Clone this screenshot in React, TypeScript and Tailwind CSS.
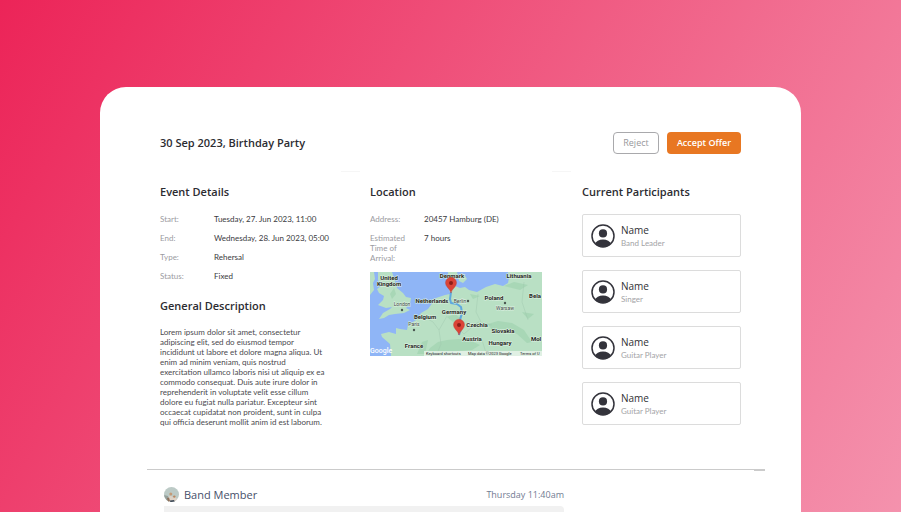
import { ReactNode } from 'react'
import clsx from 'clsx'

const eventDetails = [
  { label: 'Start:', value: 'Tuesday, 27. Jun 2023, 11:00' },
  { label: 'End:', value: 'Wednesday, 28. Jun 2023, 05:00' },
  { label: 'Type:', value: 'Rehersal' },
  { label: 'Status:', value: 'Fixed' },
]

const locationDetails = [
  { label: 'Address:', value: '20457 Hamburg (DE)' },
  { label: 'Estimated Time of Arrival:', value: '7 hours' },
]

const participants = [
  { id: 1, name: 'Name', role: 'Band Leader' },
  { id: 2, name: 'Name', role: 'Singer' },
  { id: 3, name: 'Name', role: 'Guitar Player' },
  { id: 4, name: 'Name', role: 'Guitar Player' },
]

const countries = [
  { name: 'United', x: 19, y: 8 },
  { name: 'Kingdom', x: 19, y: 14 },
  { name: 'Denmark', x: 82, y: 6 },
  { name: 'Lithuania', x: 149, y: 6 },
  { name: 'Netherlands', x: 62, y: 31 },
  { name: 'Poland', x: 124, y: 28 },
  { name: 'Bela', x: 165, y: 26 },
  { name: 'Germany', x: 84, y: 42 },
  { name: 'Belgium', x: 55, y: 47 },
  { name: 'Czechia', x: 107, y: 55 },
  { name: 'Slovakia', x: 133, y: 61 },
  { name: 'Austria', x: 102, y: 69 },
  { name: 'Hungary', x: 130, y: 73 },
  { name: 'France', x: 44, y: 76 },
  { name: 'Mol', x: 166, y: 69 },
]

const cities = [
  { name: 'London', x: 32, y: 35, dotX: 32, dotY: 38 },
  { name: 'Berlin', x: 90, y: 32, dotX: 98, dotY: 29 },
  { name: 'Warsaw', x: 135, y: 39, dotX: 135, dotY: 31 },
  { name: 'Paris', x: 44, y: 55, dotX: 44, dotY: 58 },
]

const SectionTitle = ({ children, className }: { children: ReactNode; className?: string }) => (
  <h2 className={clsx('text-[11px] leading-4 font-semibold text-[#2c2c31]', className)}>
    {children}
  </h2>
)

const DetailList = ({ items }: { items: { label: string; value: string }[] }) => (
  <dl className="mt-[14px] flex flex-col gap-[9px] font-[Lato,sans-serif] text-[8px] leading-[10px]">
    {items.map((item) => (
      <div key={item.label} className="grid grid-cols-[54px_1fr]">
        <dt className="pr-3 text-[#9b9b9f]">{item.label}</dt>
        <dd className="whitespace-nowrap text-[#3a3a3e]">{item.value}</dd>
      </div>
    ))}
  </dl>
)

const PersonIcon = () => (
  <svg viewBox="0 0 24 24" className="size-6 shrink-0" aria-hidden="true">
    <defs>
      <clipPath id="person-clip">
        <circle cx="12" cy="12" r="11" />
      </clipPath>
    </defs>
    <circle cx="12" cy="12" r="11" fill="none" stroke="#33333b" strokeWidth="1.5" />
    <circle cx="12" cy="9.4" r="4.1" fill="#33333b" />
    <path
      d="M3.6 20.5C5 17 8 15.4 12 15.4s7 1.6 8.4 5.1V24H3.6Z"
      fill="#33333b"
      clipPath="url(#person-clip)"
    />
  </svg>
)

const Avatar = () => (
  <svg viewBox="0 0 15 15" className="size-[15px] shrink-0" role="img" aria-label="Band Member">
    <defs>
      <clipPath id="avatar-clip">
        <circle cx="7.5" cy="7.5" r="7.5" />
      </clipPath>
    </defs>
    <g clipPath="url(#avatar-clip)">
      <path d="M0 0h15v15H0z" fill="#bccac6" />
      <path d="M0 8 4 9l1 6H0z" fill="#95a09c" />
      <path d="M3.5 15 5 9.5l2-.8 2 1.6 2-.6 2 2.3V15z" fill="#ddd2c6" />
      <circle cx="6.8" cy="6.9" r="1.5" fill="#c49a77" />
      <circle cx="10.3" cy="9.6" r="1.2" fill="#b98763" />
      <path d="M3 11l2-.5 1 3.5-2 1z" fill="#8f705a" />
      <path d="M6 13.5 10 13l1 2H6z" fill="#3d4a59" />
    </g>
  </svg>
)

const Pin = ({ x, y }: { x: number; y: number }) => (
  <g transform={`translate(${x} ${y})`}>
    <path
      d="M0 0C-.7-4-5.5-6-5.5-10.2a5.5 5.5 0 0 1 11 0C5.5-6 .7-4 0 0Z"
      fill="#db4437"
      stroke="#b83a30"
      strokeWidth=".4"
    />
    <circle cy="-10" r="2" fill="#8c1d18" />
  </g>
)

const RouteMap = () => (
  <svg
    viewBox="0 0 172 84"
    className="mt-[9px] block w-full font-[Roboto,sans-serif]"
    role="img"
    aria-label="Route map"
  >
    <path d="M0 0h172v84H0z" fill="#8fb5f6" />
    <g fill="#b9e0c4">
      <path d="M0 0h4l1 7-2 4 1 7-4 5Z" />
      <path d="M8 0h14l3 9 2 7 6 5 3 4 5 1-1 6-4 4 4 2-6 3-9 1-6 1-5 3-5 1 4-6 7-4 2-2-6 1-8-3 5-5 1-4-5-3-2-4 4-3-3-6Z" />
      <path d="M78 0h9l1 4-3 4v6l5 2 5-1 4 3 8 2 9-5 9-3 8 2 5-3 1-5-1-6h34v84H21l-1-12-8-7-1-3 8-2 7 2v-6l4 1 7 1 1-5 8-5 5-7 7-4 8-11 9-3 5-1-1-8Z" />
      <path d="m88 4 6-2 3 5-4 4-4-2Z" />
    </g>
    <g fill="#98cfaa" opacity=".5">
      <path d="m55 84 5-8 8-6 9-2 12-1 12 2 9 4-8 5-14 1-12 5Z" />
      <path d="m118 52 10-3 14 2 12 7 8 12-5 1-10-9-13-5-12 1Z" />
      <path d="m77 45 8-3 5 4-7 4ZM47 82l5-12 6-2-3 14ZM134 14l10-4 14 3-8 5ZM100 22l10 2-7 3ZM20 22l4-6 2 6-4 5ZM152 40l12 2-6 5Z" />
    </g>
    <path
      d="M66 84l5-12M71 72l-2-14 8-14M94 62l-8-8 5-12M94 62l14-12 14 3M108 22l-2 18 5 10M154 10l-2 20 6 18M49 42l14 8 6 8M112 68l5 16"
      fill="none"
      stroke="#9dc6ab"
      strokeWidth=".4"
    />
    <path
      d="m81 20-1 7 1 4 6 1 4 3 1 6-2 7 1 8-2 7"
      fill="none"
      stroke="#4f9de3"
      strokeWidth="2"
      strokeLinejoin="round"
      opacity=".85"
    />
    <g fill="#1f2723" stroke="#dff1e3" strokeWidth="1" paintOrder="stroke" textAnchor="middle">
      {countries.map((country) => (
        <text key={country.name} x={country.x} y={country.y} fontSize="6" fontWeight="700">
          {country.name}
        </text>
      ))}
      {cities.map((city) => (
        <text key={city.name} x={city.x} y={city.y - 1} fontSize="5" fill="#3c4842">
          {city.name}
        </text>
      ))}
    </g>
    {cities.map((city) => (
      <circle key={city.name} cx={city.dotX} cy={city.dotY} r="1.2" fill="#4a5650" />
    ))}
    <Pin x={81} y={21} />
    <Pin x={89} y={63} />
    <path d="M54 79h118v5H54z" fill="#eef5ef" opacity=".75" />
    <text x="0" y="81" fontSize="7" fontWeight="500" fill="#fff">
      Google
    </text>
    <g fontSize="4" fill="#20201f">
      <text x="56" y="83">Keyboard shortcuts</text>
      <text x="98" y="83">Map data ©2023 Google</text>
      <text x="150" y="83">Terms of U</text>
    </g>
  </svg>
)

export default function App() {
  return (
    <div className="flex min-h-screen flex-col bg-[linear-gradient(120deg,#ec2458,#f492ad)] px-[100px] pt-[87px] font-['Open_Sans',sans-serif]">
      <main className="flex grow flex-col rounded-t-[26px] bg-white pt-[45px]">
        <div className="px-[60px]">
          <header className="flex items-center justify-between">
            <h1 className="text-[11px] leading-4 font-semibold text-[#2c2c31]">
              30 Sep 2023, Birthday Party
            </h1>
            <div className="flex gap-2 text-[9px] leading-3">
              <button
                type="button"
                className="h-[22px] w-[46px] rounded border border-[#a9a9ac] font-medium text-[#98989b]"
              >
                Reject
              </button>
              <button
                type="button"
                className="h-[22px] w-[74px] rounded bg-[#e87722] font-semibold whitespace-nowrap text-white"
              >
                Accept Offer
              </button>
            </div>
          </header>

          <div className="mt-[17px] grid h-px grid-cols-[181fr_19fr_192fr_19fr_170fr]">
            <span className="col-start-2 bg-[#f6f6f6]" />
            <span className="col-start-4 bg-[#f6f6f6]" />
          </div>

          <div className="mt-3 grid grid-cols-[170fr_172fr_159fr] gap-10">
            <section className="min-w-0">
              <SectionTitle>Event Details</SectionTitle>
              <DetailList items={eventDetails} />
              <SectionTitle className="mt-[17px]">General Description</SectionTitle>
              <p className="mt-[13px] font-[Lato,sans-serif] text-[8px] leading-[10px] whitespace-nowrap text-[#4a4a4e]">
                Lorem ipsum dolor sit amet, consectetur
                <br />
                adipiscing elit, sed do eiusmod tempor
                <br />
                incididunt ut labore et dolore magna aliqua. Ut
                <br />
                enim ad minim veniam, quis nostrud
                <br />
                exercitation ullamco laboris nisi ut aliquip ex ea
                <br />
                commodo consequat. Duis aute irure dolor in
                <br />
                reprehenderit in voluptate velit esse cillum
                <br />
                dolore eu fugiat nulla pariatur. Excepteur sint
                <br />
                occaecat cupidatat non proident, sunt in culpa
                <br />
                qui officia deserunt mollit anim id est laborum.
              </p>
            </section>

            <section className="min-w-0">
              <SectionTitle>Location</SectionTitle>
              <DetailList items={locationDetails} />
              <RouteMap />
            </section>

            <section className="min-w-0">
              <SectionTitle>Current Participants</SectionTitle>
              <ul className="mt-[14px] flex flex-col gap-[13px]">
                {participants.map((participant) => (
                  <li
                    key={participant.id}
                    className="flex h-[43px] items-center gap-1.5 rounded-xs border border-[#dcdcdc] px-2"
                  >
                    <PersonIcon />
                    <div>
                      <p className="text-[10px] leading-[14px] font-medium text-[#303034]">
                        {participant.name}
                      </p>
                      <p className="font-[Lato,sans-serif] text-[8px] leading-3 text-[#a3a3a6]">
                        {participant.role}
                      </p>
                    </div>
                  </li>
                ))}
              </ul>
            </section>
          </div>
        </div>

        <div className="mt-[42px] mr-9 ml-[47px] flex h-[2px] items-start">
          <span className="h-px grow bg-[#cbcbcb]" />
          <span className="h-[2px] w-[11px] bg-[#cbcbcb]" />
        </div>

        <article className="mt-4 ml-16 flex w-[400px] max-w-full grow flex-col">
          <div className="flex items-center gap-[5px]">
            <Avatar />
            <h3 className="grow text-[11px] leading-[15px] font-medium text-[#47506a]">
              Band Member
            </h3>
            <time className="text-[9px] leading-[15px] text-[#727b92]">Thursday 11:40am</time>
          </div>
          <div className="mt-1 grow rounded-tr bg-[#f1f1f1]" />
        </article>
      </main>
    </div>
  )
}
